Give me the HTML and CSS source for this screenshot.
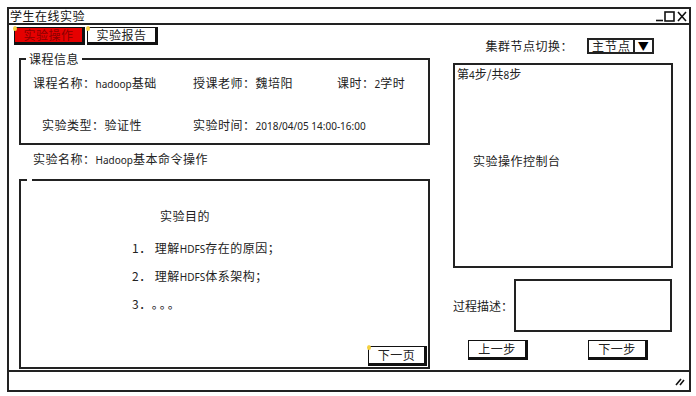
FILE: index.html
```html
<!DOCTYPE html>
<html>
<head>
  <meta charset="utf-8">
  <title>学生在线实验</title>
  <link rel="stylesheet" href="styles.css">
</head>
<body>
  <div class="window">
    <div class="title-bar">
      <span class="title">学生在线实验</span>
      <svg class="win-controls" width="34" height="12" viewBox="0 0 34 12">
        <line x1="1" y1="10.5" x2="8" y2="10.5" stroke="#111" stroke-width="1.6"/>
        <rect x="10" y="2" width="9" height="9" fill="none" stroke="#111" stroke-width="1.6"/>
        <path d="M23 2 L31 11 M31 2 L23 11" stroke="#111" stroke-width="1.6"/>
      </svg>
    </div>

    <div class="main">
      <div class="left-col">
        <div class="tabs">
          <div class="tab active"><span class="pin"></span>实验操作</div>
          <div class="tab"><span class="pin"></span>实验报告</div>
        </div>

        <fieldset class="info">
          <legend>课程信息</legend>
          <div class="info-grid">
            <span>课程名称：<span class="en">hadoop</span>基础</span>
            <span>授课老师：魏培阳</span>
            <span>课时：<span class="en">2</span>学时</span>
            <span class="indent">实验类型：验证性</span>
            <span class="wide">实验时间：<span class="en">2018/04/05 14:00-16:00</span></span>
          </div>
        </fieldset>

        <div class="exp-name">实验名称：<span class="en">Hadoop</span>基本命令操作</div>

        <fieldset class="goal">
          <legend></legend>
          <div class="goal-body">
            <div class="goal-title">实验目的</div>
            <ol class="goal-list">
              <li>1．&nbsp;理解<span class="en">HDFS</span>存在的原因；</li>
              <li>2．&nbsp;理解<span class="en">HDFS</span>体系架构；</li>
              <li>3．<span class="dots">。。。</span></li>
            </ol>
            <button class="btn next-page" type="button"><span class="pin"></span>下一页</button>
          </div>
        </fieldset>
      </div>

      <div class="right-col">
        <div class="node-row">
          <span>集群节点切换：</span>
          <div class="select">
            <span class="select-value">主节点</span>
            <span class="select-arrow">&#9660;</span>
          </div>
        </div>

        <div class="console">
          <div class="step">第<span class="en">4</span>步/共<span class="en">8</span>步</div>
          <div class="console-label">实验操作控制台</div>
        </div>

        <div class="desc-row">
          <span class="desc-label">过程描述：</span>
          <div class="desc-box"></div>
        </div>

        <div class="step-buttons">
          <button class="btn" type="button">上一步</button>
          <button class="btn" type="button">下一步</button>
        </div>
      </div>
    </div>

    <div class="status-bar">
      <svg class="grip" width="10" height="10" viewBox="0 0 10 10">
        <path d="M1 9 L6 3 M5 9 L9 4" stroke="#111" stroke-width="1.6"/>
      </svg>
    </div>
  </div>
</body>
</html>
```

FILE: styles.css
```css
body {
  margin: 0;
  font-family: "Noto Sans CJK SC", sans-serif;
  font-size: 12px;
  color: #222;
  background: #fff;
}
.en { font-family: "Noto Sans", sans-serif; font-size: 10px; letter-spacing: 0; }

.window {
  margin: 7px 0 0 7px;
  width: 684px;
  height: 385px;
  border: 2px solid #222;
  box-sizing: border-box;
  display: flex;
  flex-direction: column;
}
.title-bar {
  height: 14px;
  border-bottom: 2px solid #222;
  display: flex;
  align-items: center;
  justify-content: space-between;
  padding: 0 0 0 1px;
  line-height: 14px;
  letter-spacing: 0.5px;
  color: #111;
}

.main { flex: 1; display: flex; }
.left-col { width: 423px; padding-left: 5px; box-sizing: border-box; }
.right-col { flex: 1; padding: 0 14px 0 21px; }

/* tabs */
.tabs { display: flex; gap: 2px; margin-top: 2px; }
.tab {
  position: relative;
  width: 71px;
  height: 18px;
  box-sizing: border-box;
  border: 1px solid #111;
  border-right-width: 3px;
  border-bottom-width: 3px;
  text-align: center;
  line-height: 14px;
  letter-spacing: 0.5px;
  background: #fff;
}
.tab.active { background: #e60000; color: #8a0000; }
.pin {
  position: absolute;
  left: -2px;
  top: -2px;
  width: 4px;
  height: 5px;
  border-radius: 50%;
  background: #f4d03f;
}

/* course info */
fieldset {
  margin: 0;
  padding: 0;
  border: 2px solid #222;
  box-sizing: border-box;
}
.info { margin: 7px 0 0 5px; width: 411px; height: 93px; }
.info legend { margin-left: 5px; padding: 0 3px; line-height: 14px; letter-spacing: 0.5px; }
.info-grid {
  display: grid;
  grid-template-columns: 160px 144px auto;
  row-gap: 27px;
  padding: 10px 0 0 12px;
  line-height: 14px;
  letter-spacing: 0.5px;
  white-space: nowrap;
}
.indent { padding-left: 9px; }
.wide { grid-column: span 2; }

.exp-name { margin: 7px 0 0 19px; line-height: 14px; letter-spacing: 0.5px; }

/* goal box */
.goal {
  margin: 12px 0 0 5px;
  width: 411px;
  height: 190px;
  display: flex;
  flex-direction: column;
}
.goal legend { margin-left: 6px; width: 5px; height: 2px; padding: 0; }
.goal-body {
  flex: 1;
  display: flex;
  flex-direction: column;
  padding-left: 111px;
  letter-spacing: 0.5px;
}
.goal-title { margin: 28px 0 0 28px; line-height: 14px; }
.goal-list {
  list-style: none;
  margin: 18px 0 0;
  padding: 0;
  display: flex;
  flex-direction: column;
  gap: 13px;
  line-height: 14px;
}
.dots { margin-left: 6px; letter-spacing: 2px; }

.btn {
  position: relative;
  font: inherit;
  letter-spacing: 0.5px;
  color: #222;
  background: #fff;
  border: 1px solid #111;
  border-right-width: 3px;
  border-bottom-width: 3px;
  padding: 0;
  height: 20px;
  width: 60px;
  line-height: 14px;
}
.next-page { margin: auto 1px 1px auto; width: 59px; }

/* right column */
.node-row {
  display: flex;
  justify-content: flex-end;
  align-items: center;
  gap: 14px;
  margin: 12px 21px 0 0;
  letter-spacing: 0.5px;
}
.select {
  display: flex;
  width: 67px;
  height: 16px;
  box-sizing: border-box;
  border: 2px solid #222;
  line-height: 12px;
}
.select-value { flex: 1; padding-left: 3px; border-right: 2px solid #222; letter-spacing: 1px; }
.select-arrow { width: 17px; text-align: center; font-size: 11px; color: #000; }

.console {
  margin-top: 9px;
  width: 220px;
  height: 205px;
  box-sizing: border-box;
  border: 2px solid #222;
  padding: 2px 0 0 2px;
  line-height: 14px;
}
.console-label { margin: 72px 0 0 16px; letter-spacing: 0.5px; }

.desc-row { display: flex; align-items: center; gap: 1px; margin-top: 11px; }
.desc-label { white-space: nowrap; flex-shrink: 0; }
.desc-box {
  width: 158px;
  height: 53px;
  flex-shrink: 0;
  box-sizing: border-box;
  border: 2px solid #222;
}

.step-buttons { display: flex; gap: 60px; margin: 8px 0 0 15px; }

.status-bar {
  height: 18px;
  border-top: 2px solid #222;
  display: flex;
  justify-content: flex-end;
  align-items: center;
  padding-right: 4px;
}
```
